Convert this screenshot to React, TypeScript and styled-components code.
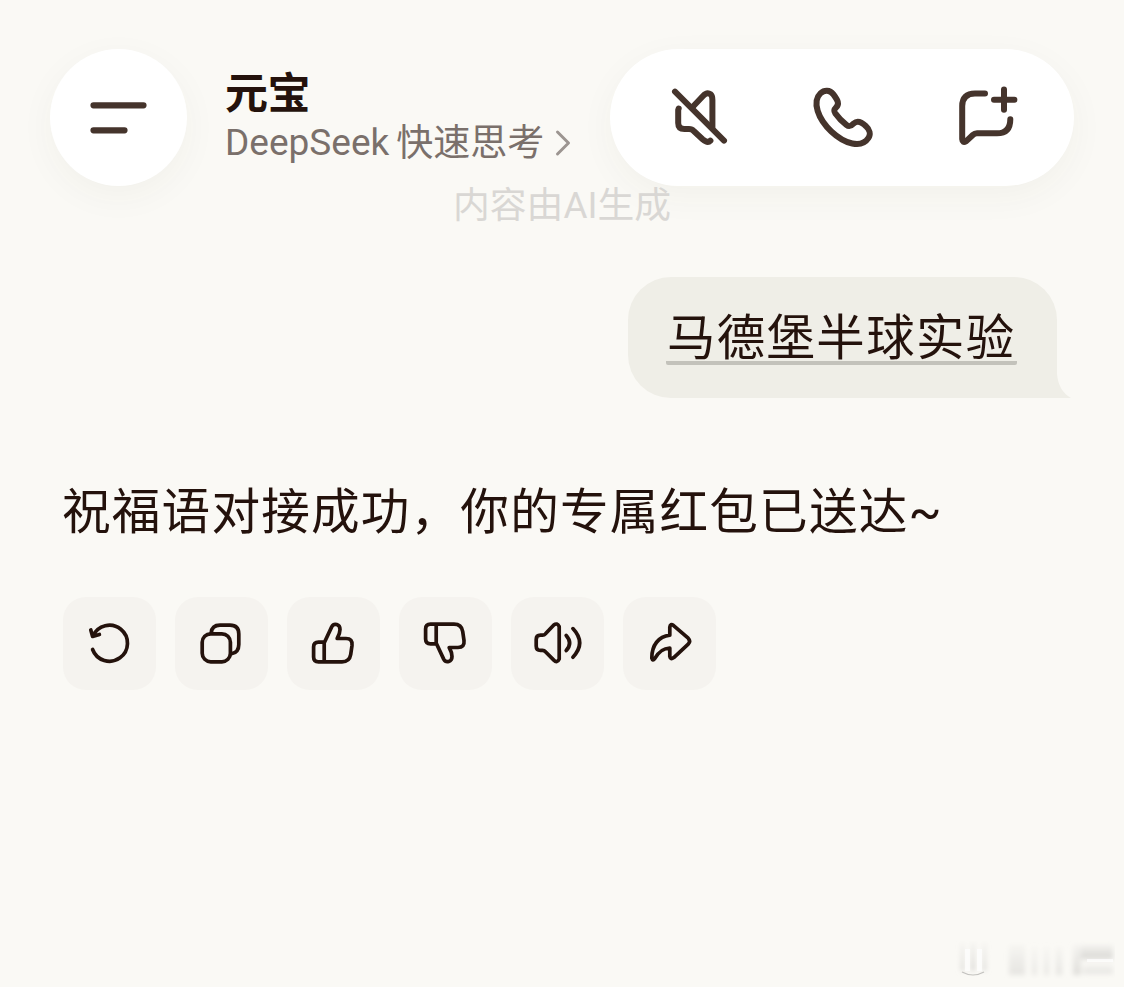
import React from 'react';
import styled, { createGlobalStyle } from 'styled-components';

const GlobalStyle = createGlobalStyle`
  * {
    box-sizing: border-box;
  }

  body {
    margin: 0;
    background: #faf9f5;
    color: #24120c;
    font-family: 'Noto Sans CJK SC', Roboto, sans-serif;
  }
`;

const Screen = styled.div`
  display: flex;
  flex-direction: column;
  width: 1124px;
  height: 987px;
  overflow: hidden;
  background: #faf9f5;
`;

// Header
const Header = styled.header`
  display: flex;
  align-items: flex-start;
  height: 186px;
  padding: 49px 50px 0;
`;

const MenuButton = styled.button`
  display: flex;
  align-items: center;
  justify-content: center;
  width: 137px;
  height: 137px;
  padding: 0;
  border: none;
  border-radius: 50%;
  background: #fff;
  box-shadow: 0 10px 36px rgba(70, 60, 30, 0.045);
`;

const TitleBlock = styled.div`
  flex: 1;
  padding: 16px 0 0 38px;
`;

const Title = styled.h1`
  margin: 0;
  font-size: 43px;
  font-weight: 700;
  line-height: 50px;
  letter-spacing: -0.5px;
`;

const ModelPicker = styled.div`
  display: flex;
  align-items: center;
  height: 55px;
  font-family: Roboto, 'Noto Sans CJK SC', sans-serif;
  font-size: 37px;
  line-height: 52px;
  white-space: nowrap;
  color: #7a706b;
`;

const ModelName = styled.span`
  margin-right: 7px;
`;

const ModelMode = styled.span`
  padding-top: 2px;
`;

const ToolPill = styled.div`
  display: flex;
  align-items: center;
  gap: 64px;
  width: 464px;
  height: 137px;
  padding-left: 50px;
  border-radius: 69px;
  background: #fff;
  box-shadow: 0 10px 36px rgba(70, 60, 30, 0.045);
`;

const Icon = styled.svg<{ $size: number; $stroke: number; $color?: string }>`
  display: block;
  flex: none;
  width: ${props => props.$size}px;
  height: ${props => props.$size}px;
  fill: none;
  stroke: ${props => props.$color || '#24120c'};
  stroke-width: ${props => props.$stroke};
  stroke-linecap: round;
  stroke-linejoin: round;
`;

const Chevron = styled.svg`
  width: 16px;
  height: 28px;
  margin: 1px 0 0 11px;
  fill: none;
  stroke: #9c9591;
  stroke-width: 3;
  stroke-linecap: round;
  stroke-linejoin: round;
`;

// Conversation
const Notice = styled.p`
  margin: 0;
  height: 40px;
  font-family: Roboto, 'Noto Sans CJK SC', sans-serif;
  font-size: 36.8px;
  line-height: 40px;
  text-align: center;
  color: #d9d7d4;
`;

const UserRow = styled.div`
  display: flex;
  justify-content: flex-end;
  align-items: flex-end;
  margin-top: 51px;
  padding-right: 53px;
`;

const Bubble = styled.div`
  height: 121px;
  padding: 27px 40px 0 38px;
  border-radius: 43px 43px 0 43px;
  background: #efeee7;
`;

const Query = styled.div`
  width: 351px;
  height: 61px;
  padding-left: 1px;
  border-bottom: 4px solid #c3c2bb;
  border-radius: 2px;
  font-size: 48.4px;
  line-height: 61px;
  letter-spacing: 1.4px;
  white-space: nowrap;
`;

const BubbleTail = styled.svg`
  display: block;
  width: 14px;
  height: 24px;
  fill: #efeee7;
`;

const Answer = styled.p`
  margin: 80px 0 0 62px;
  font-size: 48.6px;
  line-height: 60px;
  letter-spacing: 1.2px;
  white-space: nowrap;
`;

const Tilde = styled.span`
  font-family: Roboto, sans-serif;
`;

const Actions = styled.div`
  display: flex;
  gap: 19px;
  margin: 54px 0 0 62.6px;
`;

const ActionButton = styled.button`
  width: 93px;
  height: 93px;
  padding: 0;
  border: none;
  border-radius: 23px;
  background: #f5f3ef;
`;

// Faded mark in the bottom right corner
const Footer = styled.footer`
  display: flex;
  justify-content: flex-end;
  margin-top: auto;
  padding: 0 9px 8px 0;
`;

const FadedMark = styled.svg`
  display: block;
  width: 160px;
  height: 38px;
`;

const THUMB =
  'M37.5 45.2H31.5Q26.6 45.2 26.6 50V60Q26.6 64.8 31.5 64.8H55Q62.5 64.8 63.7 57.5L65 48.5Q65.8 41.5 59 41.5H50.2Q53 36.5 53 32.5C53 27 47 25.8 44.8 29.6ZM37.2 45.2V64.8';

const actions = [
  {
    label: '重新生成',
    shape: <path d="M29.6 52.5A18 18 0 1 0 30 39M27.8 33L29.6 39.4L36.4 37.4" />,
  },
  {
    label: '复制',
    shape: (
      <>
        <rect x="27.2" y="36.8" width="28.2" height="28" rx="8.5" />
        <path d="M36.2 36Q36.8 28.2 45 28.2H55Q63.8 28.2 63.8 37V47.5Q63.8 55.5 56.5 56.8" />
      </>
    ),
  },
  { label: '赞', shape: <path d={THUMB} /> },
  { label: '踩', shape: <path d={THUMB} transform="matrix(1 0 0 -1 0 92)" /> },
  {
    label: '朗读',
    shape: (
      <>
        <path d="M25.2 42.5Q25.2 38.2 29.5 38.2H31.5Q33.3 38.2 34.7 36.6L42.8 28Q46.2 25.4 48.2 29.5V62Q46.2 66.5 42.8 63.2L34.7 55Q33.3 53.4 31.5 53.4H29.5Q25.2 53.4 25.2 49Z" />
        <path d="M55.2 38.4Q62 46 55.2 53.6M61.9 31.6Q75.4 46 61.9 60.2" />
      </>
    ),
  },
  {
    label: '分享',
    shape: (
      <path d="M46.8 38.2V30.2Q47.2 26.2 50.6 28.6L65.2 41.2Q68.2 44.2 65.2 47.2L50.8 60.6Q47.4 63 46.8 59.4V51Q37.5 51.4 31.7 61.6Q29.6 64.4 28.8 61C28.8 48 35.5 39.6 46.8 38.2Z" />
    ),
  },
];

const MenuIcon = () => (
  <Icon $size={80} $stroke={6.2} $color="#45342c" viewBox="0 0 80 80">
    <path d="M14.5 27.3H64.5M14.5 52.3H45.5" />
  </Icon>
);

const MuteIcon = () => (
  <Icon $size={80} $stroke={6} $color="#45342c" viewBox="0 0 80 80">
    <path d="M15 13.7L64 62.6" />
    <path d="M32.6 29L43 18Q47 13.7 50.5 16.2Q52.4 17.7 52.4 22V49" />
    <path d="M18.7 30.6L18.2 32V45Q18.2 51 24.4 51H29Q32 51 34 53.2L42.6 61.2Q47.6 65.6 50.4 62.6" />
  </Icon>
);

const PhoneIcon = () => (
  <Icon $size={80} $stroke={6} $color="#45342c" viewBox="0 0 80 80">
    <path d="M29.4 16.4C25.8 11.6 20.2 11.9 16.4 15.4C11.6 20 11.7 26.5 13.7 33C18.2 47.3 34 62.4 48.3 65.5C54.8 66.8 60.5 66 64.3 60.2C67 56 65.6 51.4 62 48.2C58.2 44.6 53.6 41.8 49.8 45.4C46.8 48.5 45.2 49 42.4 46.8C38.2 43.6 34.2 39.4 31.2 35.2C29.6 32.8 30 31.6 31.9 29.7C35.6 26 34.2 22.9 29.4 16.4Z" />
  </Icon>
);

const NewChatIcon = () => (
  <Icon $size={80} $stroke={6} $color="#45342c" viewBox="0 0 80 80">
    <path d="M37 15.4H27Q14.2 15.4 14.2 28V61Q14.4 65.2 18 63.4L24.8 57Q26.6 55.3 29 55.3H49Q62.3 55.3 62.3 41.2" />
    <path d="M56 11.6V31.8M46 21.8H66.4" />
  </Icon>
);

const App: React.FC = () => {
  return (
    <>
      <GlobalStyle />
      <Screen>
        <Header>
          <MenuButton aria-label="菜单">
            <MenuIcon />
          </MenuButton>
          <TitleBlock>
            <Title>元宝</Title>
            <ModelPicker>
              <ModelName>DeepSeek</ModelName>
              <ModelMode>快速思考</ModelMode>
              <Chevron viewBox="0 0 16 28">
                <path d="M2.5 3L13.5 14L2.5 25" />
              </Chevron>
            </ModelPicker>
          </TitleBlock>
          <ToolPill>
            <MuteIcon />
            <PhoneIcon />
            <NewChatIcon />
          </ToolPill>
        </Header>

        <Notice>内容由AI生成</Notice>

        <UserRow>
          <Bubble>
            <Query>马德堡半球实验</Query>
          </Bubble>
          <BubbleTail viewBox="0 0 14 24">
            <path d="M0 0Q1.5 17 14 24H0Z" />
          </BubbleTail>
        </UserRow>

        <Answer>
          祝福语对接成功，你的专属红包已送达<Tilde>~</Tilde>
        </Answer>

        <Actions>
          {actions.map(action => (
            <ActionButton key={action.label} aria-label={action.label}>
              <Icon $size={93} $stroke={3.7} viewBox="0 0 93 93">
                {action.shape}
              </Icon>
            </ActionButton>
          ))}
        </Actions>

        <Footer>
          <FadedMark viewBox="0 0 160 38">
            <defs>
              <filter id="soft" x="-20%" y="-20%" width="140%" height="140%">
                <feGaussianBlur stdDeviation="2.4" />
              </filter>
              <linearGradient id="fade" x1="0" y1="0" x2="0" y2="1">
                <stop offset="0" stopColor="#d8d7d4" stopOpacity="0.2" />
                <stop offset="1" stopColor="#d8d7d4" />
              </linearGradient>
            </defs>
            <g filter="url(#soft)" fill="url(#fade)">
              <rect x="6" y="2" width="3" height="28" />
              <rect x="16" y="2" width="4" height="28" />
              <rect x="28" y="2" width="3" height="28" />
              <rect x="54" y="4" width="16" height="30" opacity="0.6" />
              <rect x="77" y="6" width="5" height="28" opacity="0.5" />
              <rect x="89" y="6" width="5" height="28" opacity="0.5" />
              <rect x="101" y="6" width="6" height="28" opacity="0.6" />
              <rect x="118" y="4" width="8" height="30" opacity="0.8" />
              <rect x="126" y="4" width="32" height="14" />
              <rect x="128" y="23" width="30" height="10" opacity="0.6" />
            </g>
            <g fill="#fff" opacity="0.7">
              <rect x="10" y="8" width="5" height="22" />
              <rect x="22" y="8" width="5" height="22" />
              <rect x="132" y="18" width="26" height="3" />
            </g>
            <path d="M7 31Q18 37 29 31" fill="none" stroke="#c3c2bf" strokeWidth="1.2" />
          </FadedMark>
        </Footer>
      </Screen>
    </>
  );
};

export default App;
